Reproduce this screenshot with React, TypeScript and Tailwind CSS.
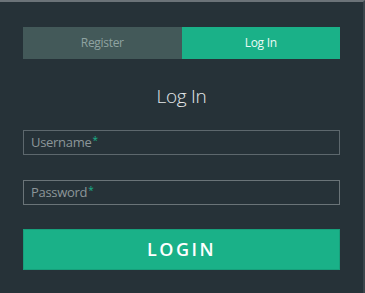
import React from "react";

export default function App() {
  return (
    <div
      className="w-[365px] h-[293px] bg-[#263238] border-t-2 border-t-[#6b7378] border-r-2 border-r-[#3a454b] flex flex-col px-[23px] pt-[25px]"
      style={{ fontFamily: '"Open Sans", "Noto Sans", sans-serif' }}
    >
      <div className="flex h-[32px] w-[317px]">
        <div className="flex-1 bg-[#435959] flex items-center justify-center text-[12px] text-[#8fa3a1] tracking-[-0.3px]">
          Register
        </div>
        <div className="flex-1 bg-[#1ab188] flex items-center justify-center text-[12px] text-[#eafaf5] tracking-[-0.3px]">
          Log In
        </div>
      </div>
      <div className="mt-[23px] h-[28px] flex items-center justify-center text-[19px] font-light text-[#e4e8ea] tracking-[-0.3px]">
        Log In
      </div>
      <div className="mt-[20px] h-[25px] w-[317px] border border-[#5d686d] flex items-center px-[7px] text-[13px] text-[#8c9699] tracking-[-0.3px]">
        Username<span className="text-[#1ab188] text-[10px] self-start mt-[2px] ml-[1px]">*</span>
      </div>
      <div className="mt-[25px] h-[25px] w-[317px] border border-[#6a7478] flex items-center px-[7px] text-[13px] text-[#8c9699] tracking-[-0.3px]">
        Password<span className="text-[#1ab188] text-[10px] self-start mt-[2px] ml-[1px]">*</span>
      </div>
      <div className="mt-[24px] h-[41px] w-[317px] bg-[#1ab188] border border-[#17a07b] flex items-center justify-center text-[18px] font-semibold text-white tracking-[2.5px]">
        LOGIN
      </div>
    </div>
  );
}
